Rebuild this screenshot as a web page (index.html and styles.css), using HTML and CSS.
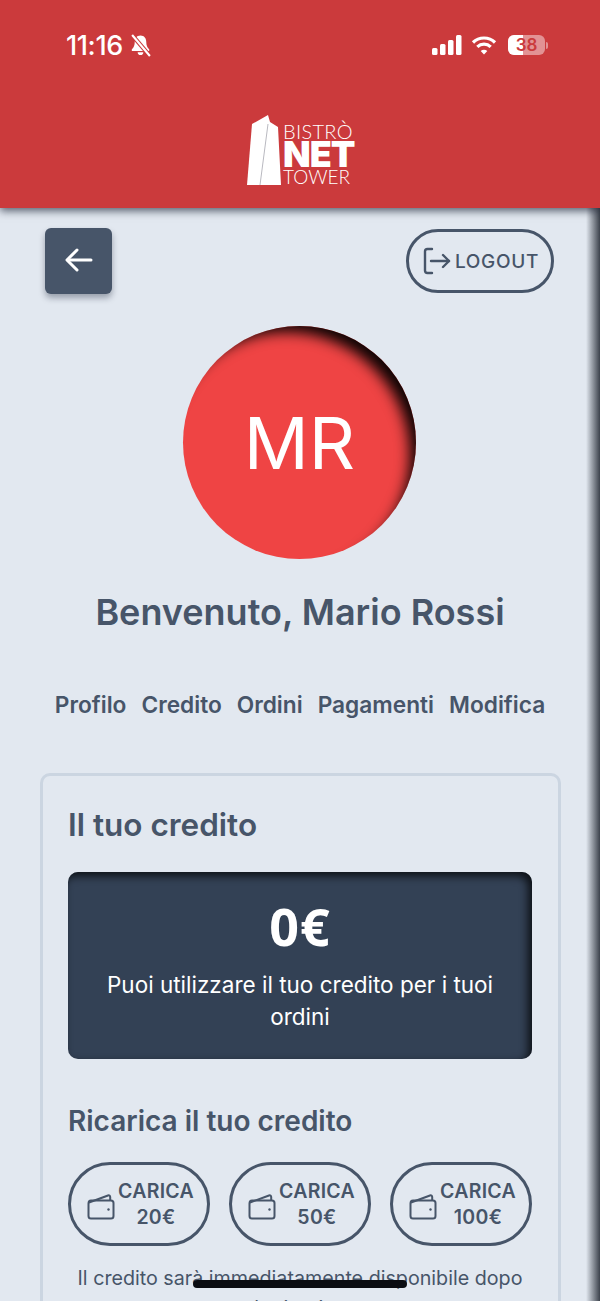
FILE: index.html
```html
<!DOCTYPE html>
<html lang="en">
<head>
  <meta charset="UTF-8" />
  <meta name="viewport" content="width=device-width, initial-scale=1.0"/>
  <title>Bistrò Net Tower</title>
  <link rel="stylesheet" href="styles.css">
</head>
<body>
  <div class="app">
    <header class="topbar">
      <div class="status">
        <div class="status-left">
          <span class="clock">11:16</span>
          <svg class="bell" viewBox="0 0 20 22" width="21" height="23">
            <path d="M10 1.500c-3.600 0-5.500 2.800-5.500 6 0 3.700-1 5.600-2.800 7.100v1.600h16.600v-1.600c-1.800-1.500-2.800-3.400-2.800-7.100 0-3.200-1.900-6-5.500-6z" fill="#fff"/>
            <path d="M7.300 17.500h5.400a2.700 2.700 0 0 1-5.400 0z" fill="#fff"/>
            <path d="M2 1l17 20" stroke="#cb3a3c" stroke-width="4"/>
            <path d="M2 1l17 20" stroke="#fff" stroke-width="2"/>
          </svg>
        </div>
        <div class="status-right">
          <svg viewBox="0 0 30 20" width="30" height="20">
            <rect x="0" y="13" width="5.500" height="7" rx="1.500" fill="#fff"/>
            <rect x="8" y="9" width="5.500" height="11" rx="1.500" fill="#fff"/>
            <rect x="16" y="5" width="5.500" height="15" rx="1.500" fill="#fff"/>
            <rect x="24" y="0" width="5.500" height="20" rx="1.500" fill="#fff"/>
          </svg>
          <svg class="wifi" viewBox="0 0 26 20" width="26" height="20" fill="none" stroke="#fff" stroke-width="3.200">
            <path d="M2 7.500c6-6 16-6 22 0"/>
            <path d="M6.300 11.800c3.800-3.600 9.600-3.600 13.400 0"/>
            <path d="M13 19.500l-3.300-3.600c1.900-1.500 4.700-1.500 6.600 0z" fill="#fff" stroke="none"/>
          </svg>
          <div class="battery">
            <div class="battery-body">
              <span class="battery-fill"></span>
              <span class="battery-num">38</span>
            </div>
            <span class="battery-cap"></span>
          </div>
        </div>
      </div>
      <div class="logo">
        <svg class="tower" viewBox="0 0 34 70" width="34" height="70">
          <path d="M5 9L21 0v70H0z" fill="#fff"/>
          <path d="M21 0l2 7 8 5 3 58H13z" fill="#fff"/>
          <path d="M21 9L13 70" stroke="#b9b9c0" stroke-width="1" fill="none"/>
        </svg>
        <div class="logo-text">
          <span class="logo-top">BISTRÒ</span>
          <span class="logo-net">NET</span>
          <span class="logo-bottom">TOWER</span>
        </div>
      </div>
    </header>

    <main class="content">
      <div class="actions">
        <button class="back">
          <svg viewBox="0 0 28 24" width="28" height="24" fill="none" stroke="#fff" stroke-width="3" stroke-linecap="round" stroke-linejoin="round">
            <path d="M26 12H3"/>
            <path d="M12 2L2 12l10 10"/>
          </svg>
        </button>
        <button class="logout">
          <svg viewBox="0 0 28 28" width="28" height="28" fill="none" stroke="#475569" stroke-width="2.400" stroke-linecap="round" stroke-linejoin="round">
            <path d="M9 2H4.500C3.100 2 2 3.100 2 4.500v19C2 24.900 3.100 26 4.500 26H9"/>
            <path d="M8 14h18"/>
            <path d="M20 8l6 6-6 6"/>
          </svg>
          <span>LOGOUT</span>
        </button>
      </div>

      <div class="avatar">MR</div>
      <h1>Benvenuto, Mario Rossi</h1>

      <nav class="tabs">
        <a>Profilo</a>
        <a>Credito</a>
        <a>Ordini</a>
        <a>Pagamenti</a>
        <a>Modifica</a>
      </nav>

      <section class="card">
        <h2>Il tuo credito</h2>
        <div class="balance">
          <div class="amount">0€</div>
          <p>Puoi utilizzare il tuo credito per i tuoi ordini</p>
        </div>
        <h3>Ricarica il tuo credito</h3>
        <div class="topups">
          <button class="topup">
            <svg viewBox="0 0 28 26" width="28" height="26" fill="none" stroke="#475569" stroke-width="2" stroke-linejoin="round">
              <path d="M1.500 9.500v12.500c0 1.400 1 2.500 2.500 2.500h20c1.400 0 2.500-1.100 2.500-2.500V9c0-1.400-1.100-2.500-2.500-2.500H4c-1.400 0-2.500 1.300-2.500 3z"/>
              <path d="M2 8.500L21 1.500c1.200-.4 2.200.2 2.200 1.500v3.500"/>
              <circle cx="21.500" cy="15.500" r="1.200" fill="#475569" stroke="none"/>
            </svg>
            <span class="topup-label">CARICA<br>20€</span>
          </button>
          <button class="topup">
            <svg viewBox="0 0 28 26" width="28" height="26" fill="none" stroke="#475569" stroke-width="2" stroke-linejoin="round">
              <path d="M1.500 9.500v12.500c0 1.400 1 2.500 2.500 2.500h20c1.400 0 2.500-1.100 2.500-2.500V9c0-1.400-1.100-2.500-2.500-2.500H4c-1.400 0-2.500 1.300-2.500 3z"/>
              <path d="M2 8.500L21 1.500c1.200-.4 2.200.2 2.200 1.500v3.500"/>
              <circle cx="21.500" cy="15.500" r="1.200" fill="#475569" stroke="none"/>
            </svg>
            <span class="topup-label">CARICA<br>50€</span>
          </button>
          <button class="topup">
            <svg viewBox="0 0 28 26" width="28" height="26" fill="none" stroke="#475569" stroke-width="2" stroke-linejoin="round">
              <path d="M1.500 9.500v12.500c0 1.400 1 2.500 2.500 2.500h20c1.400 0 2.500-1.100 2.500-2.500V9c0-1.400-1.100-2.500-2.500-2.500H4c-1.400 0-2.500 1.300-2.500 3z"/>
              <path d="M2 8.500L21 1.500c1.200-.4 2.200.2 2.200 1.500v3.500"/>
              <circle cx="21.500" cy="15.500" r="1.200" fill="#475569" stroke="none"/>
            </svg>
            <span class="topup-label">CARICA<br>100€</span>
          </button>
        </div>
        <p class="note">Il credito sarà immediatamente disponibile dopo la ricarica</p>
      </section>
    </main>

    <div class="home-bar"></div>
    <div class="edge-shadow"></div>
  </div>
</body>
</html>
```

FILE: styles.css
```css
:root {
  --red: #cb3a3c;
  --avatar: #ef4444;
  --bg: #e2e8f0;
  --text: #475569;
  --dark: #334155;
  --line: #cbd5e1;
}

* {
  box-sizing: border-box;
}

html,
body {
  margin: 0;
  height: 100%;
  overflow: hidden;
}

body {
  font-family: 'Inter', 'Liberation Sans', sans-serif;
  background-color: var(--bg);
  color: var(--text);
}

button {
  font-family: inherit;
  color: inherit;
  background: none;
  padding: 0;
}

.app {
  position: relative;
  width: 600px;
  height: 1301px;
  overflow: hidden;
}

.topbar {
  position: relative;
  z-index: 2;
  height: 208px;
  padding-top: 30px;
  background-color: var(--red);
  box-shadow: 0 3px 8px rgba(15, 23, 42, 0.65);
  color: #fff;
}

.status {
  display: flex;
  justify-content: space-between;
  align-items: center;
  height: 30px;
  padding: 0 52px 0 66px;
}

.status-left {
  display: flex;
  align-items: center;
  gap: 7px;
}

.clock {
  font-size: 27px;
  font-weight: 500;
  letter-spacing: -0.4px;
}

.status-right {
  display: flex;
  align-items: center;
  gap: 9px;
}

.wifi {
  margin-right: 2px;
}

.battery {
  display: flex;
  align-items: center;
  gap: 1px;
}

.battery-body {
  position: relative;
  width: 37px;
  height: 20px;
  border-radius: 6px;
  background-color: rgba(255, 255, 255, 0.45);
  overflow: hidden;
}

.battery-fill {
  position: absolute;
  left: 0;
  top: 0;
  bottom: 0;
  width: 15px;
  background-color: #fff;
}

.battery-num {
  position: absolute;
  inset: 0;
  text-align: center;
  font-size: 17px;
  line-height: 20px;
  font-weight: 600;
  color: var(--red);
}

.battery-cap {
  width: 2px;
  height: 7px;
  border-radius: 0 2px 2px 0;
  background-color: rgba(255, 255, 255, 0.45);
}

.logo {
  display: flex;
  justify-content: center;
  align-items: flex-end;
  gap: 2px;
  padding-top: 55px;
}

.tower {
  flex: none;
}

.logo-text {
  display: flex;
  flex-direction: column;
  width: 70px;
  height: 70px;
  padding-top: 8px;
  color: #fff;
  font-family: 'Lato', 'Liberation Sans', sans-serif;
}

.logo-top {
  font-size: 20px;
  line-height: 17px;
  font-weight: 300;
  letter-spacing: 0.3px;
}

.logo-net {
  font-family: 'Inter', sans-serif;
  font-size: 36px;
  line-height: 28px;
  font-weight: 900;
  letter-spacing: -1px;
}

.logo-bottom {
  font-size: 19px;
  line-height: 17px;
  font-weight: 300;
}

.content {
  padding: 20px 40px 0;
}

.actions {
  display: flex;
  justify-content: space-between;
  align-items: center;
  padding: 0 6px 0 5px;
}

.back {
  display: flex;
  align-items: center;
  justify-content: center;
  width: 67px;
  height: 66px;
  border: none;
  border-radius: 6px;
  background-color: var(--text);
  box-shadow: 0 4px 6px rgba(15, 23, 42, 0.35);
}

.back svg {
  margin-top: -2px;
}

.logout {
  display: flex;
  align-items: center;
  justify-content: center;
  gap: 4px;
  width: 148px;
  height: 64px;
  padding-left: 2px;
  border: 3px solid var(--text);
  border-radius: 32px;
  font-size: 19px;
  font-weight: 500;
  letter-spacing: 0.7px;
}

.avatar {
  display: flex;
  align-items: center;
  justify-content: center;
  width: 233px;
  height: 233px;
  margin: 32px 0 0 143px;
  border-radius: 50%;
  background-color: var(--avatar);
  color: #fff;
  font-size: 72px;
  box-shadow: inset -13px 13px 14px -7px rgba(0, 0, 0, 0.95);
}

h1 {
  margin: 30px 0 0;
  text-align: center;
  font-size: 36px;
  line-height: 46px;
  font-weight: 600;
}

.tabs {
  display: flex;
  justify-content: center;
  gap: 15px;
  margin: 56px -10px 0;
  font-size: 22.700px;
  line-height: 28px;
  font-weight: 600;
}

.card {
  margin: 54px -1px 0 0;
  height: 700px;
  padding: 29px 26px 0 25px;
  border: 3px solid var(--line);
  border-radius: 10px;
}

h2 {
  margin: 0;
  font-size: 31.500px;
  line-height: 40px;
  font-weight: 600;
}

.balance {
  height: 187px;
  margin-top: 27px;
  padding: 24px 20px 0;
  border-radius: 10px;
  background-color: var(--dark);
  color: #fff;
  text-align: center;
  box-shadow: inset -4px 4px 9px rgba(0, 0, 0, 0.75);
}

.amount {
  font-family: 'Open Sans', sans-serif;
  font-size: 52px;
  line-height: 60px;
  font-weight: 700;
  letter-spacing: 1px;
}

.balance p {
  margin: 13px 0 0;
  font-size: 22.500px;
  line-height: 32px;
}

h3 {
  margin: 42px 0 0;
  font-size: 28px;
  line-height: 40px;
  font-weight: 600;
}

.topups {
  display: flex;
  justify-content: space-between;
  margin-top: 21px;
}

.topup {
  display: flex;
  align-items: center;
  justify-content: center;
  gap: 3px;
  width: 142px;
  height: 84px;
  padding-left: 3px;
  border: 3px solid var(--text);
  border-radius: 42px;
}

.topup svg {
  flex: none;
  margin-top: 5px;
}

.topup-label {
  font-size: 19.500px;
  line-height: 26px;
  font-weight: 600;
  letter-spacing: 0.3px;
  text-align: center;
}

.note {
  margin: 17px 0 0;
  text-align: center;
  font-size: 19.700px;
  line-height: 30px;
}

.home-bar {
  position: absolute;
  left: 193px;
  top: 1280px;
  width: 214px;
  height: 8px;
  border-radius: 4px;
  background-color: #0b0d12;
  z-index: 3;
}

.edge-shadow {
  position: absolute;
  top: 208px;
  right: 0;
  bottom: 0;
  width: 14px;
  background: linear-gradient(to right, rgba(30, 36, 46, 0), rgba(30, 36, 46, 0.85));
  z-index: 1;
}
```
